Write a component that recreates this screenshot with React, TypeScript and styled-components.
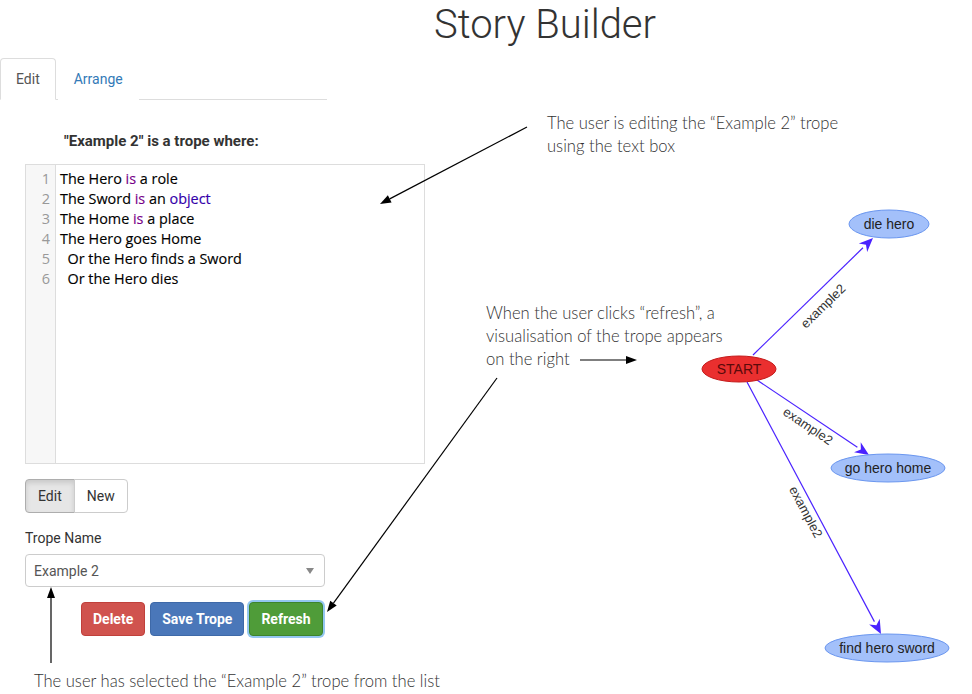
import React from "react";
import styled, { createGlobalStyle } from "styled-components";

const Global = createGlobalStyle`
  html, body { margin: 0; padding: 0; background: #fff; }
  body { font-family: Roboto, "Liberation Sans", sans-serif; color: #333; }
  * { box-sizing: border-box; }
`;

const Page = styled.div`
  position: relative;
  width: 972px;
  height: 694px;
  overflow: hidden;
`;

const Title = styled.h1`
  margin: 0;
  height: 58px;
  padding: 2px 0 0 118px;
  text-align: center;
  font-family: Roboto, sans-serif;
  font-weight: 300;
  font-size: 40px;
  line-height: 46px;
  color: #333;
`;

const Main = styled.div`
  display: flex;
  height: 636px;
`;

const LeftPanel = styled.div`
  width: 440px;
  display: flex;
  flex-direction: column;
`;

const TabBar = styled.div`
  display: flex;
  width: 327px;
  height: 42px;
  border-bottom: 1px solid #ddd;
`;

const Tab = styled.div<{ $active?: boolean }>`
  height: 42px;
  padding: 0 15px;
  margin-bottom: -1px;
  display: flex;
  align-items: center;
  font-size: 14px;
  border: 1px solid ${(p) => (p.$active ? "#ddd" : "transparent")};
  border-bottom-color: ${(p) => (p.$active ? "#fff" : "transparent")};
  border-radius: 4px 4px 0 0;
  background: #fff;
  color: ${(p) => (p.$active ? "#555" : "#337ab7")};
  margin-right: 2px;
`;

const Body = styled.div`
  padding-left: 25px;
  display: flex;
  flex-direction: column;
`;

const Prompt = styled.div`
  margin: 31px 0 0 39px;
  height: 22px;
  font-weight: 700;
  font-size: 15px;
  line-height: 20px;
  color: #333;
`;

const Editor = styled.div`
  margin-top: 11px;
  width: 400px;
  height: 300px;
  border: 1px solid #ddd;
  display: flex;
  background: #fff;
`;

const Gutter = styled.div`
  width: 30px;
  background: #f7f7f7;
  border-right: 1px solid #ddd;
  padding: 4px 5px 0 0;
  text-align: right;
  font-family: "Open Sans", sans-serif;
  font-size: 14.5px;
  line-height: 20px;
  color: #999;
`;

const Code = styled.div`
  padding: 4px 0 0 4px;
  font-family: "Open Sans", sans-serif;
  font-size: 14.4px;
  line-height: 20px;
  color: #000;
  white-space: pre;
  -webkit-text-stroke: 0.15px #000;
`;

const Kw = styled.span<{ $kind: "is" | "type" }>`
  color: ${(p) => (p.$kind === "is" ? "#770088" : "#3300aa")};
  -webkit-text-stroke: 0.15px ${(p) => (p.$kind === "is" ? "#770088" : "#3300aa")};
`;

const BtnGroup = styled.div`
  margin-top: 15px;
  display: flex;
`;

const GroupBtn = styled.div<{ $active?: boolean; $pos: "first" | "last" }>`
  height: 34px;
  padding: 6px 12px;
  font-size: 14px;
  line-height: 20px;
  color: #333;
  border: 1px solid #ccc;
  background: ${(p) => (p.$active ? "#e6e6e6" : "#fff")};
  box-shadow: ${(p) => (p.$active ? "inset 0 3px 5px rgba(0,0,0,.125)" : "none")};
  border-color: ${(p) => (p.$active ? "#adadad" : "#ccc")};
  border-radius: ${(p) => (p.$pos === "first" ? "4px 0 0 4px" : "0 4px 4px 0")};
  margin-left: ${(p) => (p.$pos === "last" ? "-1px" : "0")};
`;

const Label = styled.div`
  margin-top: 15px;
  font-size: 14px;
  line-height: 20px;
  color: #333;
`;

const Select = styled.div`
  margin-top: 6px;
  width: 300px;
  height: 33px;
  border: 1px solid #ccc;
  border-radius: 4px;
  display: flex;
  align-items: center;
  justify-content: space-between;
  padding: 0 10px 0 8px;
  font-size: 14px;
  color: #555;
`;

const Caret = styled.span`
  width: 0;
  height: 0;
  border-left: 4px solid transparent;
  border-right: 4px solid transparent;
  border-top: 6px solid #888;
`;

const Actions = styled.div`
  margin: 15px 0 0 56px;
  display: flex;
  gap: 5px;
`;

const ActionBtn = styled.div<{ $bg: string; $border: string; $focus?: boolean }>`
  height: 34px;
  padding: 6px 11px;
  font-size: 14px;
  font-weight: 700;
  line-height: 20px;
  color: #fff;
  background: ${(p) => p.$bg};
  border: 1px solid ${(p) => p.$border};
  border-radius: 4px;
  box-shadow: ${(p) => (p.$focus ? "0 0 0 2px rgba(102,175,233,.7)" : "none")};
`;

const Caption = styled.div`
  margin: 34px 0 0 9px;
  font-family: Lato, sans-serif;
  font-weight: 300;
  font-size: 16.6px;
  line-height: 22px;
  color: #333;
  white-space: nowrap;
`;

const Canvas = styled.div`
  position: relative;
  flex: 1;
`;

const Note = styled.div`
  position: absolute;
  font-family: Lato, sans-serif;
  font-weight: 300;
  font-size: 16.6px;
  line-height: 23px;
  color: #333;
  white-space: nowrap;
`;

const GraphSvg = styled.svg`
  position: absolute;
  left: 0;
  top: 0;
`;

const Overlay = styled.svg`
  position: absolute;
  left: 0;
  top: 0;
  pointer-events: none;
`;

const lines: React.ReactNode[] = [
  <>The Hero <Kw $kind="is">is</Kw> a role</>,
  <>The Sword <Kw $kind="is">is</Kw> an <Kw $kind="type">object</Kw></>,
  <>The Home <Kw $kind="is">is</Kw> a place</>,
  <>The Hero goes Home</>,
  <>{"  "}Or the Hero finds a Sword</>,
  <>{"  "}Or the Hero dies</>,
];

const EDGE = "#4a22ff";

function Node({ cx, cy, rx, ry, label, start }: { cx: number; cy: number; rx: number; ry: number; label: string; start?: boolean }) {
  return (
    <g>
      <ellipse cx={cx} cy={cy} rx={rx} ry={ry} fill={start ? "#ea2f2f" : "#a3c0fa"} stroke={start ? "#c41a1a" : "#6a96ef"} strokeWidth={1} />
      <text x={cx} y={cy + 5} textAnchor="middle" fontFamily="'Liberation Sans', Arial, sans-serif" fontSize={14} fill={start ? "#5a0a0a" : "#222"}>
        {label}
      </text>
    </g>
  );
}

function Edge({ x1, y1, x2, y2, lx, ly }: { x1: number; y1: number; x2: number; y2: number; lx: number; ly: number }) {
  const ang = Math.atan2(y2 - y1, x2 - x1);
  const len = 14;
  const w = 6;
  const bx = x2 - len * Math.cos(ang);
  const by = y2 - len * Math.sin(ang);
  const px = -Math.sin(ang) * w;
  const py = Math.cos(ang) * w;
  let deg = (ang * 180) / Math.PI;
  if (deg > 90) deg -= 180;
  if (deg < -90) deg += 180;
  return (
    <g>
      <line x1={x1} y1={y1} x2={bx} y2={by} stroke={EDGE} strokeWidth={1.2} />
      <polygon points={`${x2},${y2} ${bx + px},${by + py} ${bx + 0.3 * len * Math.cos(ang)},${by + 0.3 * len * Math.sin(ang)} ${bx - px},${by - py}`} fill={EDGE} />
      <text
        x={lx}
        y={ly}
        textAnchor="middle"
        dominantBaseline="central"
        fontFamily="'Liberation Sans', Arial, sans-serif"
        fontSize={13}
        fill="#333"
        transform={`rotate(${deg} ${lx} ${ly})`}
      >
        example2
      </text>
    </g>
  );
}

function Arrow({ x1, y1, x2, y2 }: { x1: number; y1: number; x2: number; y2: number }) {
  const ang = Math.atan2(y2 - y1, x2 - x1);
  const len = 11;
  const w = 4;
  const bx = x2 - len * Math.cos(ang);
  const by = y2 - len * Math.sin(ang);
  const px = -Math.sin(ang) * w;
  const py = Math.cos(ang) * w;
  return (
    <g>
      <line x1={x1} y1={y1} x2={bx} y2={by} stroke="#000" strokeWidth={1.2} />
      <polygon points={`${x2},${y2} ${bx + px},${by + py} ${bx - px},${by - py}`} fill="#000" />
    </g>
  );
}

export default function App() {
  return (
    <Page>
      <Global />
      <Title>Story Builder</Title>
      <Main>
        <LeftPanel>
          <TabBar>
            <Tab $active>Edit</Tab>
            <Tab>Arrange</Tab>
          </TabBar>
          <Body>
            <Prompt>"Example 2" is a trope where:</Prompt>
            <Editor>
              <Gutter>
                {lines.map((_, i) => (
                  <div key={i}>{i + 1}</div>
                ))}
              </Gutter>
              <Code>
                {lines.map((l, i) => (
                  <div key={i}>{l}</div>
                ))}
              </Code>
            </Editor>
            <BtnGroup>
              <GroupBtn $active $pos="first">Edit</GroupBtn>
              <GroupBtn $pos="last">New</GroupBtn>
            </BtnGroup>
            <Label>Trope Name</Label>
            <Select>
              <span>Example 2</span>
              <Caret />
            </Select>
            <Actions>
              <ActionBtn $bg="#d0534e" $border="#c0403b">Delete</ActionBtn>
              <ActionBtn $bg="#4a77b9" $border="#3e69a8">Save Trope</ActionBtn>
              <ActionBtn $bg="#4f9c39" $border="#3d842c" $focus>Refresh</ActionBtn>
            </Actions>
            <Caption>The user has selected the “Example 2” trope from the list</Caption>
          </Body>
        </LeftPanel>
        <Canvas>
          <Note style={{ left: 107, top: 54 }}>
            The user is editing the “Example 2” trope
            <br />
            using the text box
          </Note>
          <Note style={{ left: 46, top: 244 }}>
            When the user clicks “refresh”, a
            <br />
            visualisation of the trope appears
            <br />
            on the right
          </Note>
          <GraphSvg width={532} height={636} viewBox="440 58 532 636">
            <Edge x1={753} y1={355} x2={873} y2={238} lx={823} ly={306} />
            <Edge x1={757} y1={380} x2={869} y2={455} lx={808} ly={426} />
            <Edge x1={747} y1={382} x2={881} y2={634} lx={806} ly={512} />
            <Node cx={739} cy={369} rx={37} ry={13} label="START" start />
            <Node cx={889} cy={224} rx={40} ry={14} label="die hero" />
            <Node cx={888} cy={468} rx={57} ry={14} label="go hero home" />
            <Node cx={887} cy={648} rx={62} ry={14} label="find hero sword" />
          </GraphSvg>
        </Canvas>
      </Main>
      <Overlay width={972} height={694} viewBox="0 0 972 694">
        <Arrow x1={527} y1={127} x2={380} y2={204} />
        <Arrow x1={580} y1={360} x2={637} y2={360} />
        <Arrow x1={497} y1={378} x2={327} y2={612} />
        <Arrow x1={51} y1={663} x2={51} y2={587} />
      </Overlay>
    </Page>
  );
}
